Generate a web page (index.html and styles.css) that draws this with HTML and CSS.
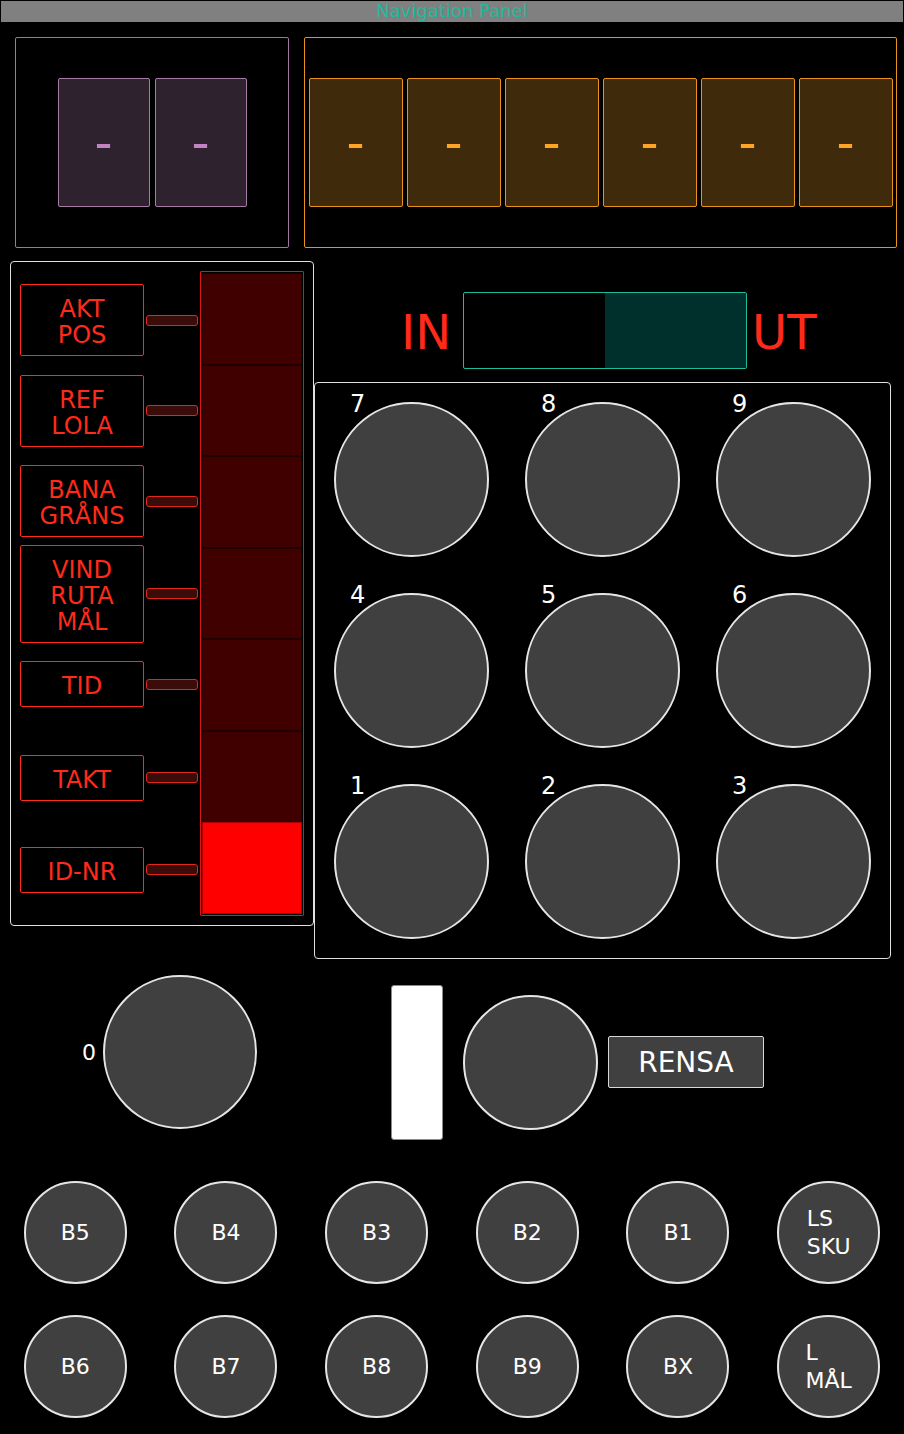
FILE: index.html
```html
<!DOCTYPE html>
<html lang="sv">
<head>
<meta charset="utf-8">
<title>Navigation Panel</title>
<link rel="stylesheet" href="styles.css">
</head>
<body>
<div class="app">
  <header class="nav">Navigation Panel</header>

  <section class="displays">
    <div class="disp disp-purple">
      <div class="cell">-</div>
      <div class="cell">-</div>
    </div>
    <div class="disp disp-orange">
      <div class="cell">-</div>
      <div class="cell">-</div>
      <div class="cell">-</div>
      <div class="cell">-</div>
      <div class="cell">-</div>
      <div class="cell">-</div>
    </div>
  </section>

  <section class="middle">
    <div class="modes">
      <div class="bar">
        <div class="seg"></div>
        <div class="seg"></div>
        <div class="seg"></div>
        <div class="seg"></div>
        <div class="seg"></div>
        <div class="seg"></div>
        <div class="seg lit"></div>
      </div>
      <div class="mode mode-first">AKT<br>POS</div><div class="link link-first"></div>
      <div class="mode mode-second">REF<br>LOLA</div><div class="link link-second"></div>
      <div class="mode">BANA<br>GRÅNS</div><div class="link"></div>
      <div class="mode">VIND<br>RUTA<br>MÅL</div><div class="link"></div>
      <div class="mode mode-tid">TID</div><div class="link link-tid"></div>
      <div class="mode">TAKT</div><div class="link"></div>
      <div class="mode">ID-NR</div><div class="link"></div>
    </div>

    <div class="right">
      <div class="toggle-row">
        <span class="dir dir-in">IN</span>
        <div class="toggle"><div class="half"></div><div class="half half-on"></div></div>
        <span class="dir dir-ut">UT</span>
      </div>
      <div class="keypad">
        <div class="key"><div class="circle key-circle"></div><span class="key-label">7</span></div>
        <div class="key"><div class="circle key-circle"></div><span class="key-label">8</span></div>
        <div class="key"><div class="circle key-circle"></div><span class="key-label">9</span></div>
        <div class="key"><div class="circle key-circle"></div><span class="key-label">4</span></div>
        <div class="key"><div class="circle key-circle"></div><span class="key-label">5</span></div>
        <div class="key"><div class="circle key-circle"></div><span class="key-label">6</span></div>
        <div class="key"><div class="circle key-circle"></div><span class="key-label">1</span></div>
        <div class="key"><div class="circle key-circle"></div><span class="key-label">2</span></div>
        <div class="key"><div class="circle key-circle"></div><span class="key-label">3</span></div>
      </div>
    </div>
  </section>

  <section class="controls">
    <div class="zero">
      <span class="zero-label">0</span>
      <div class="circle big"></div>
    </div>
    <div class="slider"></div>
    <div class="circle knob"></div>
    <div class="rensa">RENSA</div>
  </section>

  <section class="bgrid">
    <div class="circle bbtn">B5</div>
    <div class="circle bbtn">B4</div>
    <div class="circle bbtn">B3</div>
    <div class="circle bbtn">B2</div>
    <div class="circle bbtn">B1</div>
    <div class="circle bbtn"><span class="stack">LS<br>SKU</span></div>
    <div class="circle bbtn">B6</div>
    <div class="circle bbtn">B7</div>
    <div class="circle bbtn">B8</div>
    <div class="circle bbtn">B9</div>
    <div class="circle bbtn">BX</div>
    <div class="circle bbtn"><span class="stack">L<br>MÅL</span></div>
  </section>
</div>
</body>
</html>
```

FILE: styles.css
```css
* { box-sizing: border-box; }
html, body { margin: 0; background: #000; }
body {
  font-family: "DejaVu Sans", "Noto Sans", sans-serif;
  width: 904px;
  height: 1434px;
  overflow: hidden;
  color: #fff;
}

/* top bar */
.nav {
  margin: 1px 1px 0;
  height: 21px;
  background: #808080;
  color: #1abc9c;
  font-size: 18px;
  line-height: 20px;
  text-align: center;
}

/* display panels */
.displays {
  display: flex;
  gap: 15px;
  padding-left: 15px;
  margin-top: 15px;
  height: 211px;
}
.disp {
  border: 1px solid;
  border-radius: 2px;
  display: flex;
  align-items: center;
  justify-content: center;
}
.disp-purple { width: 274px; border-color: #a374a3; gap: 5px; }
.disp-orange { width: 593px; border-color: #e8921c; gap: 4px; }
.cell {
  height: 129px;
  border: 1px solid;
  border-radius: 2px;
  display: flex;
  align-items: center;
  justify-content: center;
  font-size: 50px;
  line-height: 1;
}
.disp-purple .cell { width: 92px; background: #2d222e; border-color: #a57ba5; color: #c283c2; }
.disp-orange .cell { width: 94px; background: #402a0c; border-color: #e8921c; color: #ffa424; }

/* middle */
.middle {
  display: flex;
  margin-top: 13px;
  padding-left: 10px;
}
.modes {
  width: 304px;
  height: 665px;
  border: 1px solid #e0e0e0;
  border-radius: 4px;
  padding: 9px;
  display: grid;
  grid-template-columns: 124px 52px 104px;
  grid-template-rows: repeat(7, minmax(0, 1fr));
  column-gap: 2px;
}
.bar {
  grid-column: 3;
  grid-row: 1 / -1;
  display: flex;
  flex-direction: column;
  border: 1px solid #e81010;
  border-radius: 1px;
  padding: 1px;
}
.seg {
  flex: 1;
  background: #400000;
  border: 1px solid #1e0000;
}
.seg.lit { background: #ff0000; border-color: #b00000; }
.mode {
  grid-column: 1;
  align-self: center;
  border: 1px solid #ff2a1a;
  border-radius: 2px;
  color: #ff2a1a;
  font-size: 24px;
  line-height: 26px;
  text-align: center;
  padding: 11px 0 7px;
}
.link {
  grid-column: 2;
  align-self: center;
  height: 11px;
  border: 1px solid #e0281a;
  border-radius: 3px;
  background: #3c0c0a;
}
.mode-first, .link-first { margin-top: 6px; }
.mode-second, .link-second { margin-top: 3px; }
.mode-tid, .link-tid { margin-bottom: 3px; }

.right { width: 577px; }
.toggle-row {
  display: flex;
  align-items: center;
  margin-top: 31px;
  height: 77px;
  padding-left: 87px;
}
.dir {
  font-size: 48px;
  color: #ff2a1a;
  margin-top: 3px;
}
.toggle {
  width: 284px;
  height: 77px;
  margin-left: 12px;
  margin-right: 5px;
  border: 1px solid #1abc9c;
  border-radius: 2px;
  display: flex;
}
.half { flex: 1; }
.half-on { background: #00302c; }

.keypad {
  margin-top: 13px;
  width: 577px;
  height: 577px;
  border: 1px solid #e0e0e0;
  border-radius: 4px;
  padding: 19px;
  display: grid;
  grid-template-columns: repeat(3, 155px);
  grid-template-rows: repeat(3, 155px);
  gap: 36px;
}
.key { display: grid; }
.key > * { grid-area: 1 / 1; }
.circle {
  border-radius: 50%;
  background: #404040;
  border: 2px solid #e6e6e6;
}
.key-circle { width: 155px; height: 155px; }
.key-label {
  align-self: start;
  justify-self: start;
  margin: -10px 0 0 16px;
  font-size: 24px;
  line-height: 24px;
  color: #fff;
}

/* controls */
.controls {
  display: flex;
  align-items: center;
  height: 174px;
  margin-top: 16px;
  padding-left: 82px;
}
.zero {
  display: flex;
  align-items: center;
  gap: 7px;
  margin-bottom: 20px;
}
.zero-label { font-size: 22px; color: #fff; }
.big { width: 154px; height: 154px; }
.slider {
  width: 52px;
  height: 155px;
  margin-left: 134px;
  background: #fff;
  border: 1px solid #8a8a8a;
  border-radius: 3px;
}
.knob { width: 135px; height: 135px; margin-left: 20px; }
.rensa {
  width: 156px;
  height: 52px;
  margin-left: 10px;
  background: #404040;
  border: 1px solid #d8d8d8;
  border-radius: 2px;
  font-size: 28px;
  color: #fff;
  display: flex;
  align-items: center;
  justify-content: center;
}

/* bottom buttons */
.bgrid {
  margin-top: 32px;
  display: grid;
  grid-template-columns: repeat(6, 1fr);
  row-gap: 31px;
  justify-items: center;
}
.bbtn {
  width: 103px;
  height: 103px;
  display: flex;
  align-items: center;
  justify-content: center;
  font-size: 22px;
  color: #fff;
}
.stack { text-align: left; line-height: 28px; }
```
